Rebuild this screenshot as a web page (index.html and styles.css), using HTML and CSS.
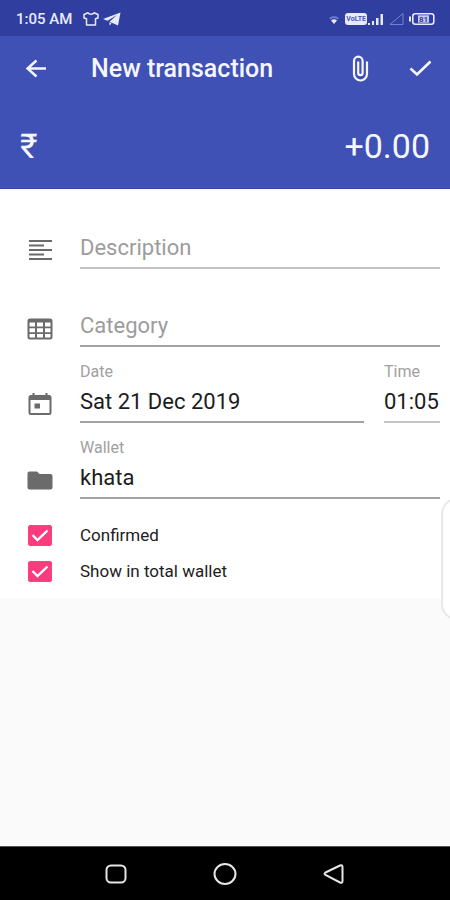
FILE: index.html
```html
<!DOCTYPE html>
<html lang="en">
<head>
<meta charset="utf-8">
<meta name="viewport" content="width=device-width, initial-scale=1">
<title>New transaction</title>
<link rel="stylesheet" href="styles.css">
</head>
<body>
<div class="screen">
  <div class="status">
    <span class="clock">1:05 AM</span>
    <svg class="status-icon" width="16" height="16" viewBox="0 0 16 16" fill="none" stroke="currentColor" stroke-width="1.5" stroke-linejoin="round"><path d="M5 1.800 1 3.500v3.500l2.500.8V14h9V7.800l2.500-.8V3.500L11 1.800c-.8 2-5.200 2-6 0Z"/></svg>
    <svg class="plane" width="18" height="14" viewBox="0 0 18 14"><path fill="currentColor" d="M17.500.5 0 7l4.500 1.800L14 3 6.500 9.800 15 13.500ZM6.500 10v3.500l2-2Z"/></svg>
    <span class="spacer"></span>
    <svg width="10" height="16" viewBox="0 0 10 16"><path fill="#6c78cc" d="M0 7Q5 3 10 7L8.700 8.500Q5 5.500 1.300 8.500Z"/><path fill="currentColor" d="M2 9.500Q5 7 8 9.500L5 13Z"/></svg>
    <span class="volte">VoLTE</span>
    <svg width="17" height="14" viewBox="0 0 17 14" fill="currentColor"><path d="M1 11h2v2H1zM5 9h2v4H5zM9 6h2.500v7H9zM13.500 2H16v11h-2.500z"/></svg>
    <svg class="nosignal" width="15" height="14" viewBox="0 0 15 14" fill="none" stroke="#7582d2" stroke-width="1"><path d="M1 12.500h13V1.500Z"/></svg>
    <svg width="26" height="14" viewBox="0 0 26 14"><path fill="currentColor" d="M0 4.500h2v5H0z"/><rect x="3.800" y="1.800" width="21" height="10.400" rx="2.500" fill="none" stroke="currentColor" stroke-width="1.600"/><rect x="9" y="3.300" width="11" height="7.400" fill="#c3c9ee"/><text x="10" y="10" class="charge">81</text></svg>
  </div>

  <header class="top">
    <div class="appbar">
      <button class="icon-btn" aria-label="Back"><svg width="24" height="24" viewBox="0 0 24 24" fill="none" stroke="currentColor" stroke-width="2.400"><path d="M22 11.500H3.500M12.500 3.500 3.500 11.500l9 8"/></svg></button>
      <h1>New transaction</h1>
      <button class="icon-btn" aria-label="Attach file"><svg width="18" height="28" viewBox="0 0 18 28" fill="none" stroke="currentColor" stroke-width="2.200"><path d="M16 6.500v12.500a6.500 6.500 0 0 1-13 0V6a4.300 4.300 0 0 1 8.600 0V18a2.200 2.200 0 0 1-4.400 0V6.500"/></svg></button>
      <button class="icon-btn save" aria-label="Save"><svg width="24" height="20" viewBox="0 0 24 20" fill="none" stroke="currentColor" stroke-width="2.600"><path d="m2.500 9.500 6.500 6L22.500 2.500"/></svg></button>
    </div>
    <div class="amount"><span class="currency">₹</span><output>+0.00</output></div>
  </header>

  <form class="form">
    <div class="row">
      <svg class="row-icon" width="24" height="24" viewBox="0 0 24 24" fill="none" stroke="currentColor" stroke-width="2"><path d="M1 2h23M1 6.500h15M1 11h23M1 15.500h15M1 20h23"/></svg>
      <div class="field"><input aria-label="Description" placeholder="Description" class="light"></div>
    </div>
    <div class="row gap">
      <svg class="row-icon" width="26" height="24" viewBox="0 0 26 24"><path fill="currentColor" fill-rule="evenodd" d="M3 1.500h20a2.500 2.500 0 0 1 2.500 2.500v16a2.500 2.500 0 0 1-2.500 2.500H3A2.500 2.500 0 0 1 .5 20V4A2.500 2.500 0 0 1 3 1.500ZM2.500 5.500V9.500H8V5.500ZM10 5.500V9.500h6V5.500ZM18 5.500V9.500h5.500V5.500ZM2.500 11.300v4H8v-4ZM10 11.300v4h6v-4ZM18 11.300v4h5.500v-4ZM2.500 17v3.500H8V17ZM10 17v3.500h6V17ZM18 17v3.500h5.500V17Z"/></svg>
      <div class="field"><input aria-label="Category" placeholder="Category"></div>
    </div>
    <div class="row">
      <svg class="row-icon" width="24" height="24" viewBox="0 0 24 24"><path fill="currentColor" fill-rule="evenodd" d="M4.500 0h2v2h11V0h2v2h1.500A2.500 2.500 0 0 1 23.500 4.500v15A2.500 2.500 0 0 1 21 22H3A2.500 2.500 0 0 1 .5 19.500v-15A2.500 2.500 0 0 1 3 2h1.500ZM2.500 7v13h19V7ZM6.500 10.500H12v5H6.500Z"/></svg>
      <div class="field"><label for="date">Date</label><input id="date" value="Sat 21 Dec 2019"></div>
      <div class="field time"><label for="time">Time</label><input id="time" value="01:05" class="light"></div>
    </div>
    <div class="row">
      <svg class="row-icon" width="26" height="24" viewBox="0 0 26 24"><path fill="currentColor" d="M2.500 2.500H10l2.500 2.500h11A2 2 0 0 1 25.500 7v11.500a2 2 0 0 1-2 2h-21a2 2 0 0 1-2-2V4.500a2 2 0 0 1 2-2Z"/></svg>
      <div class="field"><label for="wallet">Wallet</label><input id="wallet" value="khata"></div>
    </div>
    <div class="checks">
      <label class="check"><input type="checkbox" checked><span>Confirmed</span></label>
      <label class="check"><input type="checkbox" checked><span>Show in total wallet</span></label>
    </div>
    <div class="edge-handle"></div>
  </form>

  <nav class="nav">
    <button aria-label="Recent apps"><svg width="24" height="24" viewBox="0 0 24 24"><rect x="2.500" y="3.500" width="19" height="17" rx="4.500"/></svg></button>
    <button aria-label="Home"><svg width="24" height="24" viewBox="0 0 24 24"><ellipse cx="12" cy="12" rx="10.500" ry="10"/></svg></button>
    <button aria-label="Back"><svg width="24" height="24" viewBox="0 0 24 24"><path d="M18 3.500 3.500 10.500q-2 1.200 0 2.500L18 20.500q2.500.8 2.500-1.500V5q0-2.500-2.500-1.500Z"/></svg></button>
  </nav>
</div>
</body>
</html>
```
FILE: styles.css
```css
* {
  box-sizing: border-box;
}

body {
  margin: 0;
  font-family: Roboto, "Noto Sans", sans-serif;
  background: #fafafa;
  color: #212121;
}

.screen {
  min-height: 100vh;
  display: flex;
  flex-direction: column;
  overflow: hidden;
}

svg {
  display: block;
  flex: none;
}

button {
  border: 0;
  padding: 0;
  background: none;
  color: inherit;
  font: inherit;
}

.status {
  display: flex;
  align-items: center;
  height: 36px;
  padding: 2px 15px 0 16px;
  background: #303e9f;
  color: #e8eafb;
}

.clock {
  font-size: 15px;
  font-weight: 500;
}

.status-icon {
  margin-left: 11px;
}

.plane {
  margin-left: 4px;
}

.spacer {
  flex: 1;
}

.volte {
  margin-left: 6px;
  padding: 0 1px;
  border-radius: 3px;
  background: #e8eafb;
  color: #4a57ae;
  font-size: 7px;
  font-weight: 700;
  line-height: 12px;
}

.nosignal {
  margin: 0 5px;
}

.charge {
  font-size: 8px;
  font-weight: 700;
  fill: #303e9f;
}

.top {
  background: #3f51b5;
  color: #f5f6ff;
  border-bottom: 1px solid #3545a8;
}

.appbar {
  display: flex;
  align-items: center;
  height: 66px;
  padding: 0 18px 0 24px;
}

.icon-btn {
  display: grid;
  place-items: center;
  width: 24px;
  height: 48px;
}

.save {
  margin-left: 36px;
}

h1 {
  flex: 1;
  margin: 0 0 0 43px;
  font-size: 25px;
  font-weight: 500;
  line-height: 32px;
}

.amount {
  display: flex;
  align-items: center;
  justify-content: space-between;
  height: 86px;
  padding: 2px 20px 0;
  font-size: 34px;
}

.currency {
  font-size: 34px;
}

.form {
  position: relative;
  display: flex;
  flex-direction: column;
  gap: 16px;
  padding: 38px 0 9px;
  background: #fff;
}

.row {
  display: flex;
  align-items: flex-end;
  padding-right: 10px;
}

.gap {
  margin-top: 20px;
}

.row-icon {
  width: 80px;
  margin-bottom: 6px;
  color: #6b6b6b;
}

.field {
  flex: 1;
  min-width: 0;
}

.time {
  flex: 0 0 56px;
  margin-left: 20px;
}

.field label {
  display: block;
  font-size: 16px;
  line-height: 18px;
  color: #a0a0a0;
}

.field input {
  display: block;
  width: 100%;
  height: 42px;
  padding: 0;
  border: 0;
  border-bottom: 2px solid #a3a3a3;
  border-radius: 0;
  outline: 0;
  background: none;
  font: 22px Roboto, sans-serif;
  color: #1c1c1c;
}

.field .light {
  border-bottom-color: #c4c4c4;
}

.field input::placeholder {
  color: #9c9c9c;
  opacity: 1;
}

.checks {
  padding-top: 2px;
}

.check {
  display: flex;
  align-items: center;
  height: 36px;
  padding-left: 28px;
  font-size: 17px;
}

.check input {
  appearance: none;
  width: 24px;
  height: 21px;
  margin: 0 28px 0 0;
  border: 1px solid #ff4081;
  border-radius: 2px;
}

.check input:checked {
  background: #fa3c7e url("data:image/svg+xml,%3Csvg xmlns='http://www.w3.org/2000/svg' viewBox='0 0 22 19'%3E%3Cpath d='m3.500 9 5 5 10-9.500' fill='none' stroke='white' stroke-width='2.400'/%3E%3C/svg%3E") center / 100% 100% no-repeat;
}

.edge-handle {
  position: absolute;
  right: -24px;
  bottom: -22px;
  width: 33px;
  height: 122px;
  border: 2px solid #e8e8e8;
  border-radius: 16px;
  background: #fff;
}

.nav {
  display: flex;
  align-items: center;
  justify-content: center;
  gap: 85px;
  height: 54px;
  margin-top: auto;
  border-top: 1px solid #555;
  background: #000;
}

.nav svg {
  fill: none;
  stroke: #e6e6e6;
  stroke-width: 2;
}
```
